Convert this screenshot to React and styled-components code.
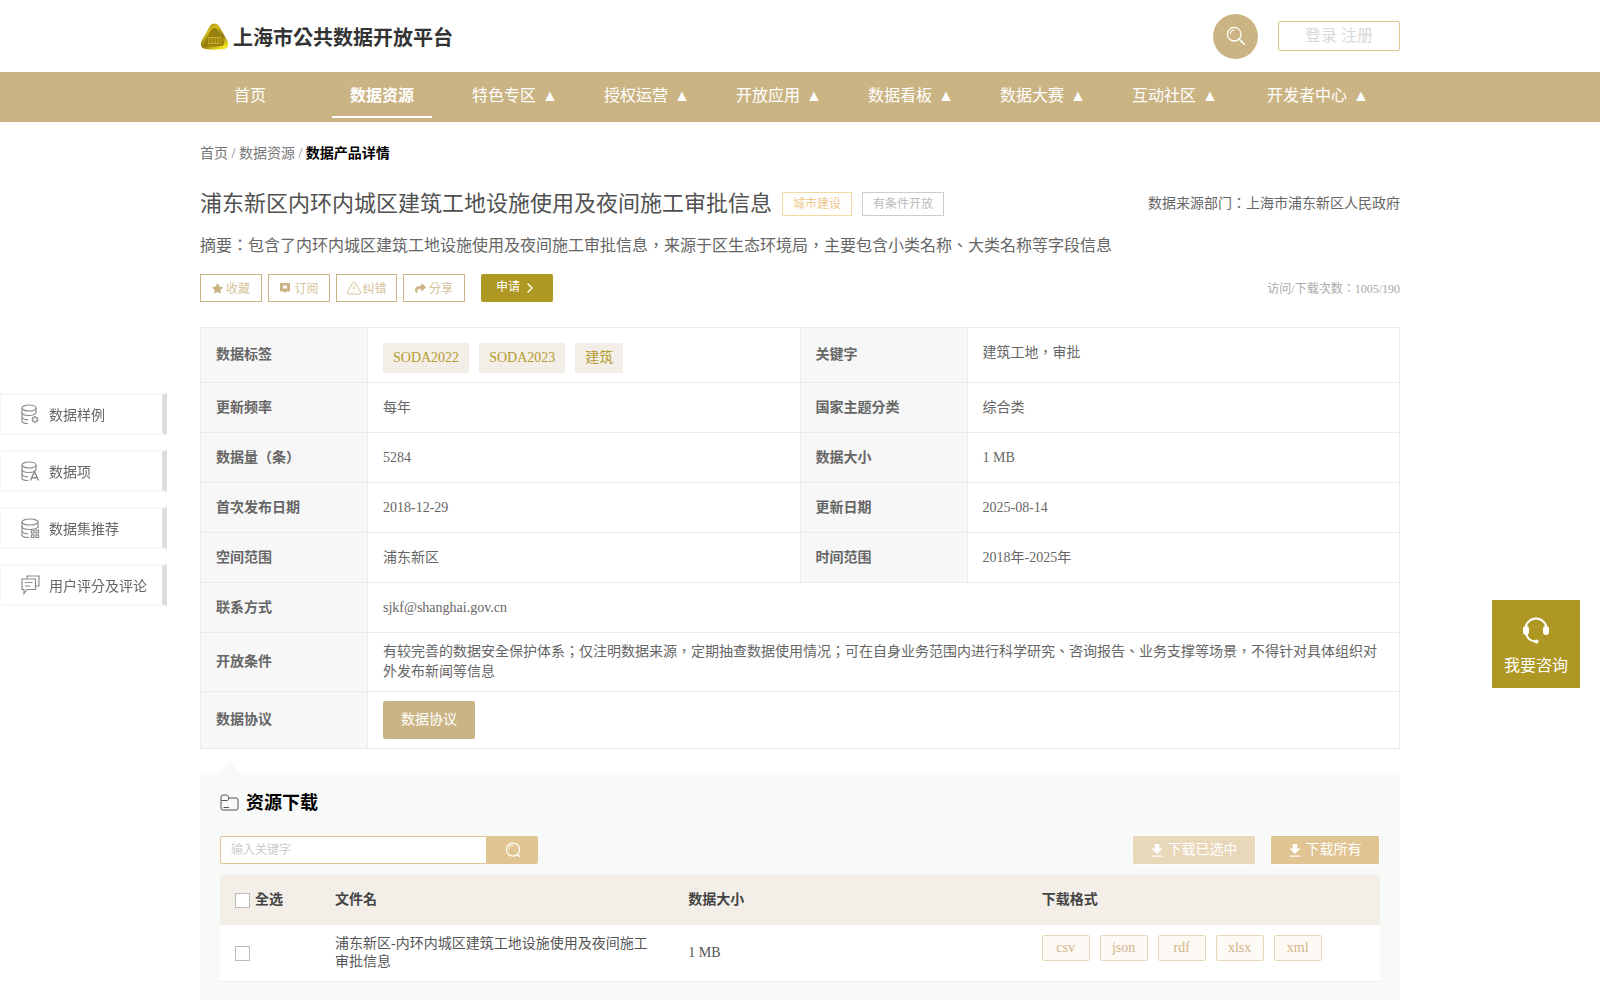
import styled, { createGlobalStyle } from "styled-components";
import { ChevronRight, TriangleAlert } from "lucide-react";
import { FaStar, FaShare } from "react-icons/fa";

const GlobalStyle = createGlobalStyle`
  * { box-sizing: border-box; }
  html, body { margin: 0; padding: 0; background: #fff; }
  body {
    font-family: "Liberation Serif", "Noto Sans CJK TC", serif;
    font-size: 14px;
    color: #666;
  }
`;

const gold = "#cbb484";
const olive = "#ae9722";
const sand = "#e0c492";

const Container = styled.div`
  width: 1200px;
  margin: 0 auto;
`;

const Header = styled(Container)`
  height: 72px;
  display: flex;
  align-items: center;
  justify-content: space-between;
`;

const Brand = styled.div`
  display: flex;
  align-items: center;
  gap: 4px;
  font-size: 20px;
  font-weight: 700;
  color: #333;
`;

const HeaderRight = styled.div`
  display: flex;
  align-items: center;
  gap: 20px;
`;

const SearchCircle = styled.div`
  width: 45px;
  height: 45px;
  border-radius: 50%;
  background: ${gold};
  display: flex;
  align-items: center;
  justify-content: center;
`;

const LoginBox = styled.div`
  width: 122px;
  height: 30px;
  border: 1px solid ${sand};
  border-radius: 2px;
  display: flex;
  align-items: center;
  justify-content: center;
  color: #d9d9d9;
  font-size: 16px;
  line-height: 26px;
`;

const NavBar = styled.nav`
  height: 50px;
  background: ${gold};
`;

const NavList = styled(Container)`
  display: flex;
  gap: 32px;
  height: 100%;
`;

const NavItem = styled.a`
  width: ${(p) => (p.$wide ? "122px" : "100px")};
  height: 46px;
  display: flex;
  align-items: center;
  justify-content: center;
  padding-left: ${(p) => (p.$arrow ? "2px" : "0")};
  color: #fff;
  font-size: 16px;
  white-space: pre;
  word-spacing: ${(p) => (p.$arrow ? "2px" : "0")};
  font-weight: ${(p) => (p.$active ? 700 : 400)};
  border-bottom: 2px solid ${(p) => (p.$active ? "#fff" : "transparent")};
`;

const Breadcrumb = styled.div`
  padding-top: 22px;
  line-height: 20px;
  color: #777;
  b {
    color: #000;
  }
`;

const TitleRow = styled.div`
  display: flex;
  align-items: center;
  margin-top: 21px;
  height: 38px;
`;

const Title = styled.h1`
  margin: 0;
  font-size: 22px;
  line-height: 28px;
  font-weight: 400;
  color: #505050;
`;

const Badge = styled.span`
  height: 24px;
  margin-left: 10px;
  padding: 0 10px;
  border: 1px solid ${(p) => (p.$muted ? "#ccc" : "#f6d9a0")};
  color: ${(p) => (p.$muted ? "#bbb" : "#f0c98c")};
  font-size: 12px;
  line-height: 22px;
`;

const Source = styled.div`
  margin-left: auto;
  margin-bottom: 4px;
  color: #666;
`;

const Summary = styled.p`
  margin: 11px 0 0;
  font-size: 16px;
  line-height: 24px;
  color: #666;
`;

const ActionRow = styled.div`
  display: flex;
  align-items: center;
  gap: 6px;
  margin-top: 16px;
  height: 28px;
`;

const ActionButton = styled.button`
  width: ${(p) => (p.$tight ? "61px" : "62px")};
  height: 28px;
  padding: 0;
  display: flex;
  align-items: center;
  justify-content: center;
  gap: ${(p) => (p.$tight ? "0" : "3px")};
  background: #fff;
  border: 1px solid ${gold};
  color: #d6c29c;
  font: inherit;
  font-size: 12px;
`;

const ApplyButton = styled.button`
  width: 72px;
  height: 28px;
  margin-left: 10px;
  display: flex;
  align-items: center;
  justify-content: center;
  gap: 2px;
  padding: 0;
  background: ${olive};
  border: 0;
  border-radius: 2px;
  color: #fff;
  font: inherit;
  font-size: 12px;
`;

const ApplyLabel = styled.span`
  margin-bottom: 4px;
`;

const Visits = styled.div`
  margin-left: auto;
  font-size: 12px;
  color: #aaa;
`;

const InfoTable = styled.table`
  width: 1200px;
  margin-top: 25px;
  border-collapse: collapse;
  table-layout: fixed;
  border: 1px solid #ebebeb;
`;

const Label = styled.th`
  width: 167px;
  height: ${(p) => p.$h || 50}px;
  padding: 0 15px;
  background: #f7f7f7;
  border: 1px solid #ebebeb;
  text-align: left;
  font-size: 14px;
  line-height: 20px;
  font-weight: 700;
  color: #666;
`;

const Value = styled.td`
  padding: ${(p) => (p.$raised ? "0 15px 4px" : "0 15px")};
  border: 1px solid #ebebeb;
  line-height: 20px;
  color: #666;
`;

const Chips = styled.div`
  display: flex;
  gap: 10px;
  padding-top: 6px;
`;

const Chip = styled.span`
  height: 30px;
  padding: 0 10px;
  background: #f3efe8;
  border-radius: 2px;
  color: #b39b2d;
  line-height: 30px;
`;

const ProtocolButton = styled.button`
  width: 92px;
  height: 38px;
  background: ${gold};
  border: 0;
  border-radius: 2px;
  color: #fff;
  font: inherit;
  display: block;
`;

const Downloads = styled.section`
  position: relative;
  margin-top: 24px;
  padding: 0 20px 18px;
  background: #f8faf9;
  &::before {
    content: "";
    position: absolute;
    top: -12px;
    left: 20px;
    border-left: 10px solid transparent;
    border-right: 10px solid transparent;
    border-bottom: 12px solid #f8faf9;
  }
`;

const SectionTitle = styled.h2`
  display: flex;
  align-items: center;
  gap: 7px;
  margin: 0;
  height: 63px;
  padding-bottom: 4px;
  font-size: 18px;
  line-height: 24px;
  font-weight: 700;
  color: #000;
`;

const Toolbar = styled.div`
  display: flex;
  align-items: center;
  height: 28px;
`;

const KeywordInput = styled.input`
  width: 267px;
  height: 28px;
  padding: 0 10px;
  background: #fff;
  border: 1px solid ${sand};
  border-radius: 2px 0 0 2px;
  outline: none;
  font: inherit;
  font-size: 12px;
  &::placeholder {
    color: #ccc;
  }
`;

const KeywordButton = styled.button`
  width: 51px;
  height: 28px;
  display: flex;
  align-items: center;
  justify-content: center;
  background: ${sand};
  border: 0;
  border-radius: 0 2px 2px 0;
`;

const DownloadButton = styled.button`
  height: 30px;
  width: ${(p) => (p.$all ? "110px" : "124px")};
  margin-left: ${(p) => (p.$all ? "14px" : "auto")};
  display: flex;
  align-items: center;
  justify-content: center;
  gap: 5px;
  padding: 0;
  background: ${(p) => (p.$all ? sand : "#e9d7b9")};
  border: 1px solid #fff;
  border-radius: 2px;
  color: #fff;
  font: inherit;
  line-height: 24px;
`;

const Row = styled.div`
  display: grid;
  grid-template-columns: 100px 1fr 1fr 1fr;
  align-items: center;
  height: ${(p) => (p.$head ? 50 : 57)}px;
  margin-top: ${(p) => (p.$head ? "11px" : "0")};
  background: ${(p) => (p.$head ? "#f3efe8" : "#fff")};
  border-bottom: ${(p) => (p.$head ? "0" : "1px solid #eeeee8")};
  color: ${(p) => (p.$head ? "#444" : "#555")};
  font-weight: ${(p) => (p.$head ? 700 : 400)};
`;

const Cell = styled.div`
  display: flex;
  align-items: ${(p) => (p.$top ? "flex-start" : "center")};
  align-self: ${(p) => (p.$top ? "start" : "auto")};
  gap: 5px;
  padding: ${(p) => (p.$top ? "10px" : "0")} 15px 0;
  line-height: 18px;
`;

const CheckBox = styled.span`
  width: 15px;
  height: 15px;
  flex: none;
  background: #fff;
  border: 1px solid #bbb;
`;

const Format = styled.span`
  width: 48px;
  height: 26px;
  flex: none;
  margin-right: 5px;
  background: #fdf9f4;
  border: 1px solid #e9d7b9;
  border-radius: 2px;
  color: #d2b48c;
  text-align: center;
  line-height: 24px;
`;

const SideNav = styled.aside`
  position: fixed;
  top: 393px;
  left: 0;
  display: flex;
  flex-direction: column;
  gap: 15px;
`;

const SideItem = styled.div`
  width: 167px;
  height: 42px;
  display: flex;
  align-items: center;
  gap: 9px;
  padding: 0 0 1px 20px;
  background: #fff;
  border: 2px solid #f7f7f7;
  border-left-width: 1px;
  border-right: 5px solid #ddd;
  color: #666;
`;

const Consult = styled.div`
  position: fixed;
  top: 600px;
  left: 1492px;
  width: 88px;
  height: 88px;
  display: flex;
  flex-direction: column;
  align-items: center;
  gap: 8px;
  padding-top: 16px;
  background: ${olive};
  color: #fff;
  font-size: 16px;
`;

const Logo = () => (
  <svg width="29" height="27" viewBox="0 0 29 27">
    <defs>
      <linearGradient id="rimFill" x1="0" y1="0" x2="0.6" y2="1">
        <stop offset="0%" stopColor="#8a7412" />
        <stop offset="35%" stopColor="#d8bd1a" />
        <stop offset="70%" stopColor="#8f7a10" />
        <stop offset="100%" stopColor="#f0dc20" />
      </linearGradient>
    </defs>
    <path
      d="M14.5 0.5 C18 0.5 19.5 3.5 21.5 7.5 L27 17 C29.5 21 28 25.5 23.5 26 C18 27 11 27 5.5 26 C1 25.5 -0.5 21 2 17 L7.5 7.5 C9.5 3.5 11 0.5 14.5 0.5 Z"
      fill="url(#rimFill)"
    />
    <path
      d="M14.5 5 C17 5 18 7 19.5 10 L23.5 17 C25 20 24 22.5 21 23 C17 23.6 12 23.6 8 23 C5 22.5 4 20 5.5 17 L9.5 10 C11 7 12 5 14.5 5 Z"
      fill="#98820f"
    />
    <path d="M9 20.5 V15 M12 20.5 V15 M15 20.5 V15 M18 20.5 V15 M21 20.5 V15 M8 14.5 H21 M8 20.5 H21" stroke="#c9ae2a" strokeWidth="1" fill="none" />
  </svg>
);

const SearchIcon = ({ size = 20, short }) => (
  <svg width={size} height={size} viewBox="0 0 22 22" fill="none" stroke="#fff">
    {short ? (
      <>
        <circle cx="11" cy="10.5" r="9" strokeWidth="1.6" />
        <path d="M5.5 10 A5.5 5.5 0 0 1 11 4.5" strokeWidth="1.3" />
        <path d="M17.5 17.5 L20.5 20.5" strokeWidth="1.8" />
      </>
    ) : (
      <>
        <circle cx="9" cy="9" r="7.5" strokeWidth="1.4" />
        <path d="M4.5 9 A4.5 4.5 0 0 1 9 4.5" strokeWidth="1.2" />
        <path d="M14.5 14.5 L20.5 20.5" strokeWidth="1.8" />
      </>
    )}
  </svg>
);

const BubbleIcon = () => (
  <svg width="12" height="12" viewBox="0 0 12 12">
    <path d="M1 1 H11 V9.5 H7.5 L6 11 L4.5 9.5 H1 Z M4 3.5 V6.5 H8 V3.5 Z" fill={gold} fillRule="evenodd" />
  </svg>
);

const DownloadGlyph = () => (
  <svg width="12" height="13" viewBox="0 0 12 13" fill="#fff">
    <path d="M3.7 0 H8.3 V4.5 H11.5 L6 10 L0.5 4.5 H3.7 Z" />
    <rect x="0.5" y="11.5" width="11" height="1.2" />
  </svg>
);

const FolderIcon = () => (
  <svg width="19" height="17" viewBox="0 0 19 17" fill="none" stroke="#555" strokeWidth="1">
    <path d="M1 14 V3 Q1 1 3 1 H6.5 Q7.5 1 8 2 L8.8 4 H16 Q18 4 18 6 V14 Q18 16 16 16 H3 Q1 16 1 14 Z" />
    <path d="M1.5 6.5 H7.5 Q8.3 6.5 8.8 4" />
    <path d="M3.5 13.5 H9" />
  </svg>
);

const Cylinder = ({ tall }) => (
  <>
    <ellipse cx={tall ? 9 : 8} cy="4" rx={tall ? 8 : 7} ry="3" />
    <path d={tall ? "M1 4 V17 C1 18.5 4 19.5 8 19.5" : "M1 4 V17 C1 18.8 3.5 19.5 7 19.5"} />
    <path d={tall ? "M17 4 V10" : "M15 4 V9"} />
    <path d={tall ? "M1 8.5 C1 10.5 5 11.5 9 11.5 C12 11.5 15.5 11 17 9" : "M1 8.5 C1 10.5 4.5 11.5 8 11.5 C10.5 11.5 13.5 11 15 9"} />
    <path d="M1 13 C1 14.8 3.5 15.6 7 15.8" />
  </>
);

const SideIcon = ({ kind }) => (
  <svg width="19" height="20" viewBox="0 0 19 20" fill="none" stroke="#8c8c8c" strokeWidth="1.2">
    {kind === "comment" ? (
      <>
        <path d="M6 3.5 V1 H18 V11 H15" />
        <path d="M1 4 H14.5 V14.5 H6 L3 18.5 V14.5 H1 Z" />
        <path d="M4 7.5 H11.5 M4 11 H9" />
      </>
    ) : (
      <Cylinder tall={kind === "grid"} />
    )}
    {kind === "gear" && <circle cx="14" cy="15.5" r="2.5" strokeWidth="1.9" strokeDasharray="2 0.6" />}
    {kind === "letter" && <path d="M9.5 19.5 L13.5 10.5 L17.5 19.5 M11 16.8 H16" strokeWidth="1.5" />}
    {kind === "grid" && (
      <path d="M10.5 12 H13 V15 H10.5 Z M15 12 H17.5 V15 H15 Z M10.5 16.8 H13 V19.5 H10.5 Z M15 16.8 H17.5 V19.5 H15 Z" />
    )}
  </svg>
);

const Headset = () => (
  <svg width="28" height="28" viewBox="0 0 28 28" fill="none" stroke="#fff">
    <path d="M3.5 13 A10.5 10.5 0 0 1 24.5 13" strokeWidth="2" />
    <path d="M4 16 C4.5 22 8 25 13 25.5" strokeWidth="2" />
    <circle cx="14.5" cy="25.5" r="2" fill="#fff" stroke="none" />
    <rect x="1" y="10" width="6" height="9" rx="3" fill="#fff" stroke="none" />
    <rect x="21" y="10" width="6" height="9" rx="3" fill="#fff" stroke="none" />
  </svg>
);

const navItems = ["首页", "数据资源", "特色专区 ▲", "授权运营 ▲", "开放应用 ▲", "数据看板 ▲", "数据大赛 ▲", "互动社区 ▲", "开发者中心 ▲"];

const sideItems = [
  { kind: "gear", text: "数据样例" },
  { kind: "letter", text: "数据项" },
  { kind: "grid", text: "数据集推荐" },
  { kind: "comment", text: "用户评分及评论" },
];

const infoRows = [
  ["更新频率", "每年", "国家主题分类", "综合类"],
  ["数据量（条）", "5284", "数据大小", "1 MB"],
  ["首次发布日期", "2018-12-29", "更新日期", "2025-08-14"],
  ["空间范围", "浦东新区", "时间范围", "2018年-2025年"],
];

const formats = ["csv", "json", "rdf", "xlsx", "xml"];

export default function App() {
  return (
    <>
      <GlobalStyle />
      <Header>
        <Brand>
          <Logo />
          上海市公共数据开放平台
        </Brand>
        <HeaderRight>
          <SearchCircle>
            <SearchIcon />
          </SearchCircle>
          <LoginBox>登录 注册</LoginBox>
        </HeaderRight>
      </Header>

      <NavBar>
        <NavList>
          {navItems.map((item, i) => (
            <NavItem key={item} $active={i === 1} $arrow={i > 1} $wide={i === 8}>
              {item}
            </NavItem>
          ))}
        </NavList>
      </NavBar>

      <Container>
        <Breadcrumb>
          首页 / 数据资源 / <b>数据产品详情</b>
        </Breadcrumb>

        <TitleRow>
          <Title>浦东新区内环内城区建筑工地设施使用及夜间施工审批信息</Title>
          <Badge>城市建设</Badge>
          <Badge $muted>有条件开放</Badge>
          <Source>数据来源部门：上海市浦东新区人民政府</Source>
        </TitleRow>

        <Summary>摘要：包含了内环内城区建筑工地设施使用及夜间施工审批信息，来源于区生态环境局，主要包含小类名称、大类名称等字段信息</Summary>

        <ActionRow>
          <ActionButton>
            <FaStar size={11} color={gold} /> 收藏
          </ActionButton>
          <ActionButton>
            <BubbleIcon /> 订阅
          </ActionButton>
          <ActionButton $tight>
            <TriangleAlert size={16} color={gold} strokeWidth={1.2} />
            纠错
          </ActionButton>
          <ActionButton>
            <FaShare size={11} color={gold} /> 分享
          </ActionButton>
          <ApplyButton>
            <ApplyLabel>申请</ApplyLabel>
            <ChevronRight size={16} />
          </ApplyButton>
          <Visits>访问/下载次数：1005/190</Visits>
        </ActionRow>

        <InfoTable>
          <tbody>
            <tr>
              <Label $h={55}>数据标签</Label>
              <Value>
                <Chips>
                  <Chip>SODA2022</Chip>
                  <Chip>SODA2023</Chip>
                  <Chip>建筑</Chip>
                </Chips>
              </Value>
              <Label>关键字</Label>
              <Value $raised>建筑工地，审批</Value>
            </tr>
            {infoRows.map((row) => (
              <tr key={row[0]}>
                <Label>{row[0]}</Label>
                <Value>{row[1]}</Value>
                <Label>{row[2]}</Label>
                <Value>{row[3]}</Value>
              </tr>
            ))}
            <tr>
              <Label>联系方式</Label>
              <Value colSpan={3}>sjkf@shanghai.gov.cn</Value>
            </tr>
            <tr>
              <Label $h={59}>开放条件</Label>
              <Value colSpan={3}>
                有较完善的数据安全保护体系；仅注明数据来源，定期抽查数据使用情况；可在自身业务范围内进行科学研究、咨询报告、业务支撑等场景，不得针对具体组织对外发布新闻等信息
              </Value>
            </tr>
            <tr>
              <Label $h={57}>数据协议</Label>
              <Value colSpan={3}>
                <ProtocolButton>数据协议</ProtocolButton>
              </Value>
            </tr>
          </tbody>
        </InfoTable>

        <Downloads>
          <SectionTitle>
            <FolderIcon />
            资源下载
          </SectionTitle>
          <Toolbar>
            <KeywordInput placeholder="输入关键字" />
            <KeywordButton>
              <SearchIcon size={16} short />
            </KeywordButton>
            <DownloadButton>
              <DownloadGlyph /> 下载已选中
            </DownloadButton>
            <DownloadButton $all>
              <DownloadGlyph /> 下载所有
            </DownloadButton>
          </Toolbar>

          <Row $head>
            <Cell>
              <CheckBox />
              全选
            </Cell>
            <Cell>文件名</Cell>
            <Cell>数据大小</Cell>
            <Cell>下载格式</Cell>
          </Row>
          <Row>
            <Cell>
              <CheckBox />
            </Cell>
            <Cell>浦东新区-内环内城区建筑工地设施使用及夜间施工审批信息</Cell>
            <Cell>1 MB</Cell>
            <Cell $top>
              {formats.map((f) => (
                <Format key={f}>{f}</Format>
              ))}
            </Cell>
          </Row>
        </Downloads>
      </Container>

      <SideNav>
        {sideItems.map((item) => (
          <SideItem key={item.text}>
            <SideIcon kind={item.kind} />
            {item.text}
          </SideItem>
        ))}
      </SideNav>

      <Consult>
        <Headset />
        我要咨询
      </Consult>
    </>
  );
}
